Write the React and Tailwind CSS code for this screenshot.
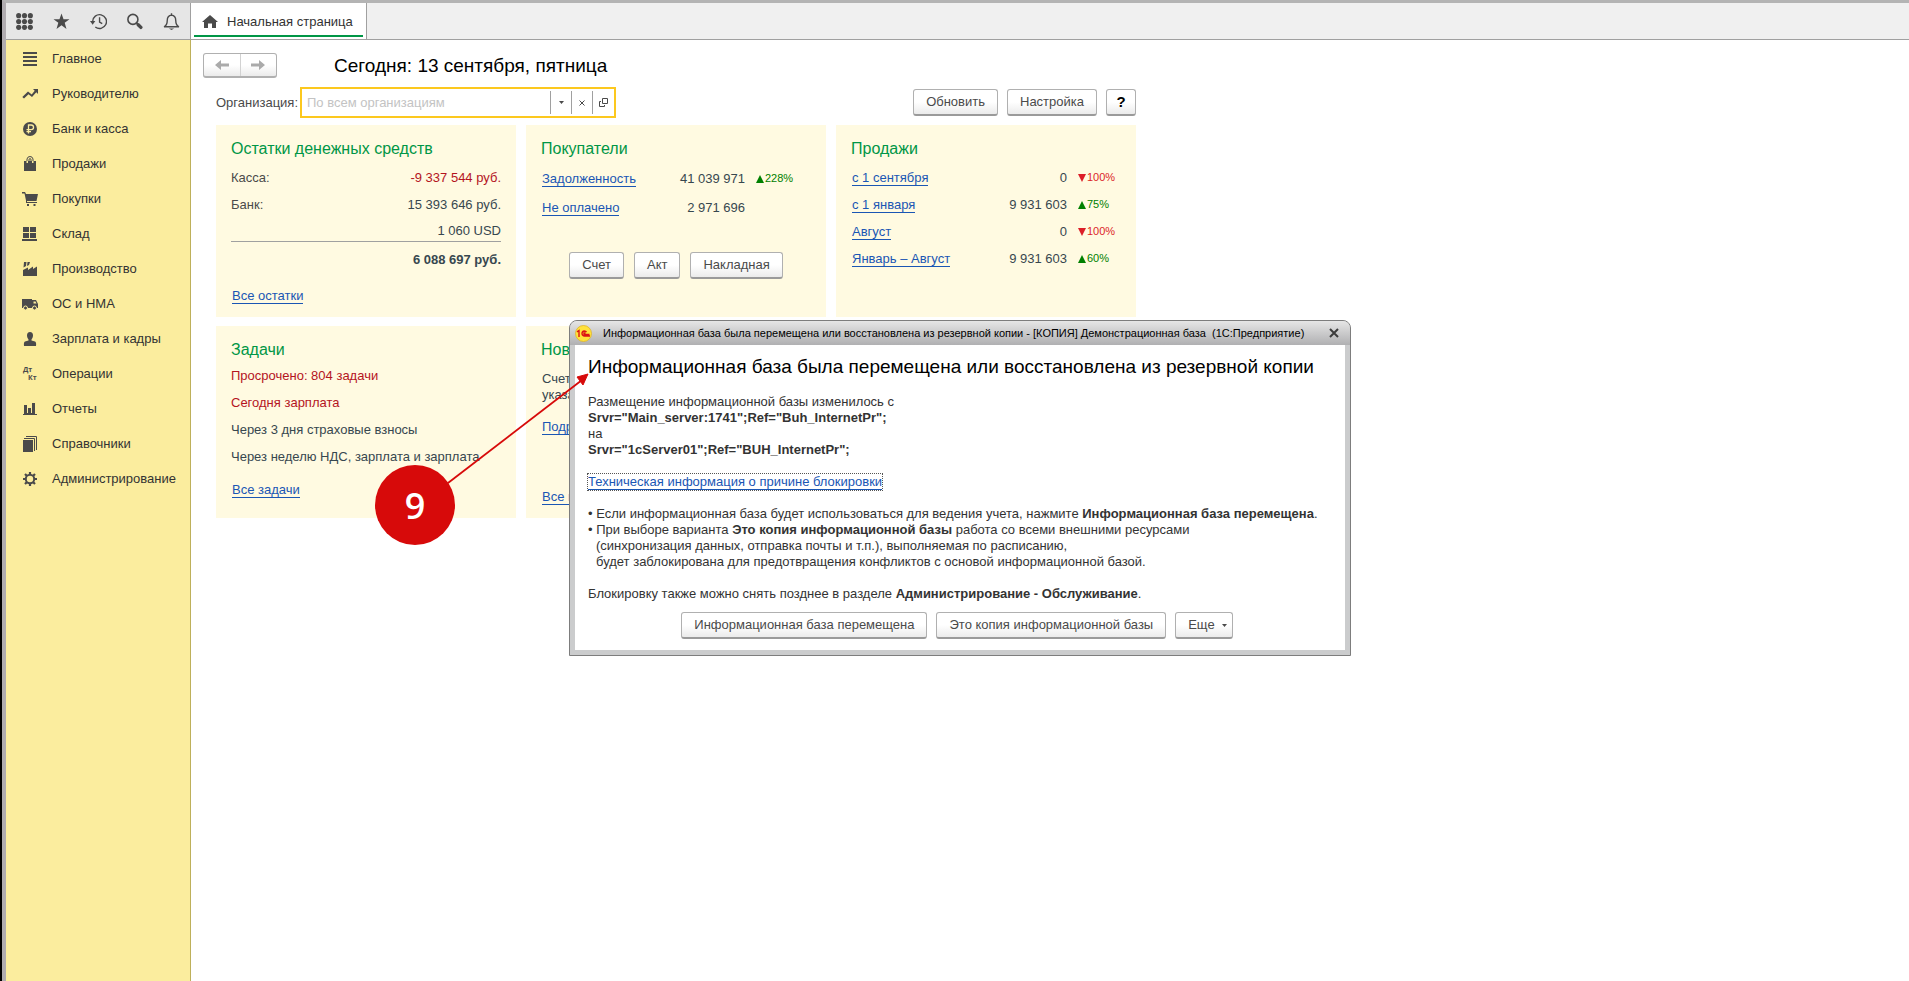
import React, { useState } from 'react';

const dark = "#4a4a4a"

function Icon({ children, size = 16 }) {
  return (
    <svg width={size} height={size} viewBox="0 0 16 16" fill={dark} className="shrink-0" aria-hidden="true">
      {children}
    </svg>
  )
}

const sections = [
  { title: "Главное", icon: <path d="M1 1h14v2H1zM1 5h14v2H1zM1 9h14v2H1zM1 13h14v2H1z" /> },
  { title: "Руководителю", icon: <path d="M11 3h5v5l-1.700-1.700L10 11 6.500 8.200 2 12.500.3 11 6 5.500l3.700 3L12.700 4.700z" /> },
  {
    title: "Банк и касса",
    icon: <>
      <circle cx="8" cy="8" r="7" />
      <path d="M6.500 12.500V4h2.700a2.300 2.300 0 0 1 0 4.700H4.500M4.500 10.700H9" fill="none" stroke="#fbed9e" strokeWidth="1.300" />
    </>
  },
  {
    title: "Продажи",
    icon: <>
      <path d="M2 5h2.500v2H6V5h4v2h1.500V5H14v10H2z" />
      <path d="M5 5V3Q5.500.5 8 .5T11 3v2M7 5V3.200Q8 2 9 3.200V5" fill="none" stroke={dark} />
    </>
  },
  { title: "Покупки", icon: <path d="M0 1h3l1 2h12l-1.500 7H5v1h10v1H4V9.500L2.500 2.500H0zM5 13h2v2H5zM11.500 13h2v2h-2z" /> },
  { title: "Склад", icon: <path d="M1 1h6v5H1zM8 1h6v5H8zM1 7h6v5H1zM8 7h6v5H8zM0 13h15v2H0z" /> },
  { title: "Производство", icon: <path d="M1 9 6 6.500V9l5-3.500V8l4-2.500V15H1zM2 1h2.500L4 5 1.500 6.500zM5.500 1H8L7 4 5 5z" /> },
  {
    title: "ОС и НМА",
    icon: <>
      <path d="M0 3h10v9H0zM10 4h4l2 4v4h-6z" />
      <path d="M11.500 5.500h2l1 2h-3z" fill="#fbed9e" />
      <circle cx="3.500" cy="12" r="2" stroke="#fbed9e" />
      <circle cx="12.500" cy="12" r="2" stroke="#fbed9e" />
    </>
  },
  { title: "Зарплата и кадры", icon: <path d="M8 1c2 0 3 1.500 3 3.500 0 2-1 3.200-1.500 4v1l3.500 1q1.500.500 1 4.500H2q-.5-4 1-4.500l3.500-1v-1C6 7.700 5 6.500 5 4.500 5 2.500 6 1 8 1z" /> },
  {
    title: "Операции",
    icon: <g fontSize="7" fontWeight="700" fontFamily="Open Sans, sans-serif">
      <text x="1" y="6">Дт</text>
      <text x="6" y="14">Кт</text>
    </g>
  },
  { title: "Отчеты", icon: <path d="M2 4h3v8h1V7h3v5h1V2h3v11h2v1H1v-1h1z" /> },
  {
    title: "Справочники",
    icon: <>
      <path d="M1 4h10v12H1z" />
      <path d="M2 2.500h10.500V15M4 .5h10.500V14" fill="none" stroke={dark} />
    </>
  },
  {
    title: "Администрирование",
    icon: <g fill="none" stroke={dark}>
      <circle cx="8" cy="8" r="4.200" strokeWidth="2" />
      <path d="M8 1v2.500M8 12.500V15M1 8h2.500M12.500 8H15M3 3l2 2M11 11l2 2M3 13l2-2M11 5l2-2" strokeWidth="2.200" />
    </g>
  },
]

const tools = [
  {
    title: "Все функции",
    icon: <>
      {[2.500, 8, 13.500].map((y) => [2.500, 8, 13.500].map((x) => <circle key={x + "-" + y} cx={x} cy={y} r="2.400" />))}
    </>
  },
  { title: "Избранное", icon: <path d="M8 .5l1.900 5.300h5.600l-4.500 3.400 1.700 5.800L8 11.500 3.300 15 5 9.200.5 5.800h5.600z" /> },
  {
    title: "История",
    icon: <>
      <path d="M2.500 8A6.500 6.500 0 1 1 5 13.200M9 4v4.500l2.500 1.500" fill="none" stroke={dark} strokeWidth="1.300" />
      <path d="M0 7.500h5L2.500 11z" />
    </>
  },
  {
    title: "Поиск",
    icon: <>
      <circle cx="6.500" cy="6" r="4.700" fill="none" stroke={dark} strokeWidth="1.500" />
      <path d="M10 9.500l1 1" stroke={dark} strokeWidth="1.500" />
      <path d="M11.500 11l2.500 2.500" stroke={dark} strokeWidth="3.200" strokeLinecap="round" />
    </>
  },
  {
    title: "Уведомления",
    icon: <>
      <path d="M1 13q3-1.500 3-6 0-4.500 4-5 4 .5 4 5 0 4.500 3 6zM8 .3v2" fill="none" stroke={dark} strokeWidth="1.300" />
      <path d="M5.500 14.500h5L8 16z" />
    </>
  },
]

function Button({ children, className = "px-3", ...rest }) {
  return (
    <button {...rest} className={"flex h-[27px] items-center justify-center whitespace-nowrap rounded-[3px] border border-b-2 border-[#b0b0b0] border-b-[#9a9a9a] bg-linear-to-b from-white from-50% to-[#ebebeb] text-[#4a4a4a] " + className}>
      {children}
    </button>
  )
}

function TextLink({ children, className = "" }) {
  return <a href="#" className={"inline-block border-b border-[#1a56b4] leading-[15px] text-[#1a56b4] " + className}>{children}</a>
}

function Card({ title, children }) {
  return (
    <section className="flex h-48 flex-col bg-[#fffae1] px-[15px] pt-[14px]">
      <h2 className="text-base leading-5 text-[#009646]">{title}</h2>
      {children}
    </section>
  )
}

function Change({ value }) {
  if (!value) return null
  const up = value > 0
  return (
    <span className={"flex items-center gap-px text-[11px] " + (up ? "text-[#008000]" : "text-[#dc1e28]")}>
      <svg width="8" height="8" viewBox="0 0 8 8" fill="currentColor" aria-hidden="true">
        <path d={up ? "M4 0 8 8H0z" : "M0 0h8L4 8z"} />
      </svg>
      {Math.abs(value)}%
    </span>
  )
}

const debts = [
  { title: "Задолженность", sum: "41 039 971", change: 228 },
  { title: "Не оплачено", sum: "2 971 696" },
]

const sales = [
  { title: "с 1 сентября", sum: "0", change: -100 },
  { title: "с 1 января", sum: "9 931 603", change: 75 },
  { title: "Август", sum: "0", change: -100 },
  { title: "Январь – Август", sum: "9 931 603", change: 60 },
]

function Sums({ rows, rowClass, lastClass }) {
  return (
    <table className="mt-[5px] w-full">
      <tbody>
        {rows.map((row) => (
          <tr key={row.title} className={rowClass}>
            <td className="p-0 pl-px"><TextLink>{row.title}</TextLink></td>
            <td className="p-0 text-right text-[#37474f]">{row.sum}</td>
            <td className={"p-0 pl-[11px] " + lastClass}><Change value={row.change} /></td>
          </tr>
        ))}
      </tbody>
    </table>
  )
}

function Dialog({ onClose }) {
  return (
    <div role="dialog" aria-labelledby="dialog-title" className="absolute left-[567px] top-[320px] w-[782px] rounded-t-[8px] border border-[#7d7d7d] bg-[#cbcccd]">
      <div className="flex h-6 items-center rounded-t-[7px] bg-linear-to-b from-[#e6e6e6] to-[#b0b0b2] pl-[5px] pr-[11px]">
        <svg width="17" height="17" viewBox="0 0 17 17" className="shrink-0" aria-hidden="true">
          <circle cx="8.500" cy="8.500" r="8" fill="#ffe23c" stroke="#e0b428" strokeWidth=".8" />
          <path d="M2 6.800 4 5.500V12M11.500 7.200Q10.800 6 9.300 6 7 6.200 7 8.500 7.200 11 9.500 11H15M10.500 8H9v1.500h5.500" fill="none" stroke="#dc1414" strokeWidth="1.400" />
        </svg>
        <span className="flex-1 whitespace-pre pl-[11px] pt-px text-[11px] text-black">
          Информационная база была перемещена или восстановлена из резервной копии - [КОПИЯ] Демонстрационная база  (1С:Предприятие)
        </span>
        <button onClick={onClose} aria-label="Закрыть">
          <svg width="10" height="10" viewBox="0 0 10 10" stroke="#3c3c3c" strokeWidth="2" aria-hidden="true"><path d="M1 1l8 8M9 1 1 9" /></svg>
        </button>
      </div>
      <div className="mx-[5px] mb-[5px] bg-white px-[13px] pb-[11px] leading-4 text-[#333]">
        <h1 id="dialog-title" className="whitespace-nowrap pt-2.5 text-[19px] leading-6 text-black">Информационная база была перемещена или восстановлена из резервной копии</h1>
        <p className="mt-[15px]">Размещение информационной базы изменилось с</p>
        <p className="font-bold">Srvr="Main_server:1741";Ref="Buh_InternetPr";</p>
        <p>на</p>
        <p className="font-bold">Srvr="1cServer01";Ref="BUH_InternetPr";</p>
        <p className="mt-4"><TextLink className="outline-1 outline-dotted outline-[#555]">Техническая информация о причине блокировки</TextLink></p>
        <ul className="mt-4 whitespace-nowrap">
          <li>• Если информационная база будет использоваться для ведения учета, нажмите <b>Информационная база перемещена</b>.</li>
          <li>
            • При выборе варианта <b>Это копия информационной базы</b> работа со всеми внешними ресурсами
            <div className="pl-2">(синхронизация данных, отправка почты и т.п.), выполняемая по расписанию,<br />будет заблокирована для предотвращения конфликтов с основой информационной базой.</div>
          </li>
        </ul>
        <p className="mt-4">Блокировку также можно снять позднее в разделе <b>Администрирование - Обслуживание</b>.</p>
        <div className="mt-2.5 flex justify-center gap-[9px] pr-1.5">
          <Button onClick={onClose}>Информационная база перемещена</Button>
          <Button onClick={onClose}>Это копия информационной базы</Button>
          <Button className="gap-[7px] pl-3 pr-[5px]">
            Еще
            <svg width="5" height="3" fill="#4a4a4a" aria-hidden="true"><path d="M0 0h5L2.500 3z" /></svg>
          </Button>
        </div>
      </div>
    </div>
  )
}

export default function App() {

  const [organization, updateOrganization] = useState("")
  const [dialogOpen, updateDialogOpen] = useState(true)

  return (
    <div className="relative flex min-h-screen flex-col overflow-hidden border-l-2 border-black bg-white font-['Liberation_Sans',Arial,sans-serif] text-[13px] text-[#4a4a4a]">
      <div className="flex flex-1 flex-col border-l-4 border-t-3 border-l-[#b0acb0] border-t-[#b4b4b4]">

        <header className="flex h-[37px] border-b border-[#a0a0a0] bg-[#f0f0f0]">
          <div className="flex w-[185px] items-center justify-between border-r border-[#a0a0a0] bg-[#e6e6e6] pl-2.5 pr-2.5">
            {tools.map((tool) => (
              <button key={tool.title} aria-label={tool.title}><Icon size={17}>{tool.icon}</Icon></button>
            ))}
          </div>
          <div className="flex flex-col border-r border-[#a0a0a0] bg-white px-[3px]">
            <a href="#" className="flex h-8 items-center gap-[9px] pl-2 pr-2.5 pt-[5px] text-[#333]">
              <svg width="16" height="13" viewBox="0 0 16 13" fill={dark} aria-hidden="true"><path d="M8 0l8 7h-2v6h-4V8.500H6V13H2V7H0z" /></svg>
              Начальная страница
            </a>
            <div className="h-0.5 bg-[#009646]"></div>
          </div>
        </header>

        <div className="flex flex-1">
          <nav className="w-[185px] shrink-0 border-r border-[#beb05a] bg-[#fbed9e] pt-px">
            {sections.map((section) => (
              <a href="#" key={section.title} className="flex h-[35px] items-center gap-[14px] whitespace-nowrap pl-4 text-[#333]">
                <Icon>{section.icon}</Icon>
                {section.title}
              </a>
            ))}
          </nav>

          <main className="flex-1 pl-3 pt-3">
            <div className="flex items-center">
              <div className="flex h-[25px] w-[74px] rounded-[3px] border border-b-2 border-[#b0b0b0] bg-linear-to-b from-white from-50% to-[#ebebeb]">
                <button aria-label="Назад" className="flex flex-1 items-center justify-center border-r border-[#d2d2d2]">
                  <svg width="14" height="12" viewBox="0 0 14 12" fill="#aaa" aria-hidden="true"><path d="M0 6 6 1v3.500h8v3H6V11z" /></svg>
                </button>
                <button aria-label="Вперед" className="flex flex-1 items-center justify-center">
                  <svg width="14" height="12" viewBox="0 0 14 12" fill="#aaa" aria-hidden="true"><path d="M14 6 8 1v3.500H0v3h8V11z" /></svg>
                </button>
              </div>
              <h1 className="ml-[57px] pt-0.5 text-[19px] leading-6 text-black">Сегодня: 13 сентября, пятница</h1>
            </div>

            <div className="w-[933px] pl-[13px]">
              <div className="mt-[9px] flex items-center">
                <label htmlFor="organization" className="w-[84px]">Организация:</label>
                <div className="flex h-[31px] w-[316px] items-center border-2 border-[#fcc81e]">
                  <input id="organization" type="text" placeholder="По всем организациям" value={organization} onChange={(event) => updateOrganization(event.target.value)} className="h-full min-w-0 flex-1 pl-[5px] outline-none placeholder:text-[#c3c3c3]" />
                  <button aria-label="Выбрать" className="flex h-[23px] w-[21px] items-center justify-center border-l border-[#a0a0a0]">
                    <svg width="5" height="3" fill="#4a4a4a" aria-hidden="true"><path d="M0 0h5L2.500 3z" /></svg>
                  </button>
                  <button aria-label="Очистить" onClick={() => updateOrganization("")} className="flex h-[23px] w-[21px] items-center justify-center border-l border-[#a0a0a0]">
                    <svg width="6" height="6" viewBox="0 0 6 6" stroke="#4a4a4a" aria-hidden="true"><path d="M.5.5l5 5M5.500.5l-5 5" /></svg>
                  </button>
                  <button aria-label="Открыть" className="flex h-[23px] w-[22px] items-center justify-center border-l border-[#a0a0a0]">
                    <svg width="9" height="9" viewBox="0 0 9 9" fill="none" stroke="#4a4a4a" aria-hidden="true"><path d="M3.500.5h5v5h-5zM2 3.500H.5v5h5V7" /></svg>
                  </button>
                </div>
                <div className="ml-auto flex gap-[9px]">
                  <Button>Обновить</Button>
                  <Button>Настройка</Button>
                  <Button className="w-[30px] text-[15px] font-bold text-black">?</Button>
                </div>
              </div>

              <div className="mt-[7px] grid grid-cols-3 gap-x-2.5 gap-y-[9px]">
                <Card title="Остатки денежных средств">
                  <table className="mt-[5px] w-full text-[#37474f]">
                    <tbody>
                      <tr className="h-[27px]">
                        <td className="p-0 text-[#4a4a4a]">Касса:</td>
                        <td className="p-0 text-right text-[#b4141e]">-9 337 544 руб.</td>
                      </tr>
                      <tr className="h-[27px]">
                        <td className="p-0 text-[#4a4a4a]">Банк:</td>
                        <td className="p-0 text-right">15 393 646 руб.</td>
                      </tr>
                      <tr className="h-[23px] border-b border-[#a0a0a0]">
                        <td className="p-0"></td>
                        <td className="p-0 text-right align-bottom">1 060 USD</td>
                      </tr>
                      <tr className="h-9">
                        <td className="p-0"></td>
                        <td className="p-0 text-right font-bold">6 088 697 руб.</td>
                      </tr>
                    </tbody>
                  </table>
                  <p className="mt-[9px] pl-px"><TextLink>Все остатки</TextLink></p>
                </Card>

                <Card title="Покупатели">
                  <Sums rows={debts} rowClass="h-[29px]" lastClass="w-[66px]" />
                  <div className="mt-[30px] flex justify-center gap-2.5">
                    <Button>Счет</Button>
                    <Button>Акт</Button>
                    <Button>Накладная</Button>
                  </div>
                </Card>

                <Card title="Продажи">
                  <Sums rows={sales} rowClass="h-[27px]" lastClass="w-[54px]" />
                </Card>

                <Card title="Задачи">
                  <ul className="mt-0.5 leading-[27px] text-[#37474f]">
                    <li className="text-[#b4141e]">Просрочено: 804 задачи</li>
                    <li className="text-[#b4141e]">Сегодня зарплата</li>
                    <li>Через 3 дня страховые взносы</li>
                    <li>Через неделю НДС, зарплата и зарплата</li>
                  </ul>
                  <p className="mt-2.5 pl-px"><TextLink>Все задачи</TextLink></p>
                </Card>

                <Card title="Новости">
                  <p className="mt-[11px] pl-px leading-4 text-[#37474f]">Счет-фактура:<br />указание данных</p>
                  <p className="mt-[14px] pl-px"><TextLink>Подробнее</TextLink></p>
                  <p className="mt-[50px] pl-px"><TextLink>Все новости</TextLink></p>
                </Card>
              </div>
            </div>
          </main>
        </div>
      </div>

      {dialogOpen && <Dialog onClose={() => updateDialogOpen(false)} />}

      <svg width="220" height="180" viewBox="0 0 220 180" className="pointer-events-none absolute left-[373px] top-[370px]" aria-hidden="true">
        <path d="M73 113 207 10" stroke="#d70a0a" strokeWidth="1.800" />
        <path d="M213 4 208 15 202 7z" fill="#d70a0a" stroke="#d70a0a" />
        <circle cx="40" cy="135" r="40" fill="#d70a0a" />
        <text x="40" y="149" textAnchor="middle" fill="#fff" fontSize="36" fontWeight="600" fontFamily="Open Sans, sans-serif">9</text>
      </svg>
    </div>
  )
}
